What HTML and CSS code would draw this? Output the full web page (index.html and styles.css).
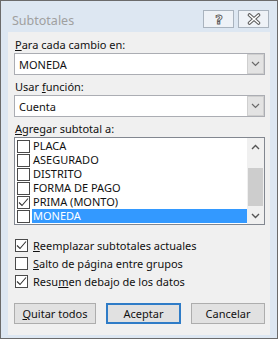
FILE: index.html
```
<!DOCTYPE html>
<html lang="es">
<head>
    <meta charset="UTF-8">
    <title>Subtotales</title>
    <link rel="stylesheet" href="styles.css">
</head>
<body>
    <div class="window">
        <div class="titlebar">
            <span class="title">Subtotales</span>
            <div class="title-buttons">
                <span class="tbtn">
                    <svg width="14" height="14" viewBox="0 0 14 14"><text x="7" y="12" text-anchor="middle" font-family="DejaVu Sans, sans-serif" font-size="13" font-weight="bold" fill="#fff" stroke="#5a5a5a" stroke-width="0.9">?</text></svg>
                </span>
                <span class="tbtn">
                    <svg width="14" height="12" viewBox="0 0 14 12">
                        <path d="M2.5 2 L11.5 10 M11.5 2 L2.5 10" stroke="#5a5a5a" stroke-width="3.6" stroke-linecap="round"/>
                        <path d="M2.5 2 L11.5 10 M11.5 2 L2.5 10" stroke="#fff" stroke-width="1.6" stroke-linecap="round"/>
                    </svg>
                </span>
            </div>
        </div>

        <div class="panel">
            <div class="label"><u>P</u>ara cada cambio en:</div>
            <div class="combo">
                <span class="combo-text">MONEDA</span>
                <span class="combo-btn"><svg width="9" height="6" viewBox="0 0 9 6"><path d="M1 1 L4.5 4.5 L8 1" fill="none" stroke="#6a6a6a" stroke-width="1.2"/></svg></span>
            </div>

            <div class="label">Usar <u>f</u>unción:</div>
            <div class="combo">
                <span class="combo-text">Cuenta</span>
                <span class="combo-btn"><svg width="9" height="6" viewBox="0 0 9 6"><path d="M1 1 L4.5 4.5 L8 1" fill="none" stroke="#6a6a6a" stroke-width="1.2"/></svg></span>
            </div>

            <div class="label"><u>A</u>gregar subtotal a:</div>
            <div class="listbox">
                <div class="list-items">
                    <div class="item"><span class="box"></span><span class="item-text">PLACA</span></div>
                    <div class="item"><span class="box"></span><span class="item-text">ASEGURADO</span></div>
                    <div class="item"><span class="box"></span><span class="item-text">DISTRITO</span></div>
                    <div class="item"><span class="box"></span><span class="item-text">FORMA DE PAGO</span></div>
                    <div class="item"><span class="box"><svg width="11" height="11" viewBox="0 0 11 11"><path d="M1 5.5 L4 8.5 L10 1.5" fill="none" stroke="#333" stroke-width="1.1"/></svg></span><span class="item-text">PRIMA (MONTO)</span></div>
                    <div class="item"><span class="box"></span><span class="item-text selected">MONEDA</span></div>
                </div>
                <div class="scrollbar">
                    <span class="sb-arrow"><svg width="9" height="6" viewBox="0 0 9 6"><path d="M1 5 L4.5 1.5 L8 5" fill="none" stroke="#555" stroke-width="1.4"/></svg></span>
                    <div class="sb-track"><div class="sb-thumb"></div></div>
                    <span class="sb-arrow"><svg width="9" height="6" viewBox="0 0 9 6"><path d="M1 1 L4.5 4.5 L8 1" fill="none" stroke="#555" stroke-width="1.4"/></svg></span>
                </div>
            </div>

            <div class="options">
                <div class="option"><span class="box"><svg width="11" height="11" viewBox="0 0 11 11"><path d="M1 5.5 L4 8.5 L10 1.5" fill="none" stroke="#333" stroke-width="1.1"/></svg></span><span><u>R</u>eemplazar subtotales actuales</span></div>
                <div class="option"><span class="box"></span><span><u>S</u>alto de página entre grupos</span></div>
                <div class="option"><span class="box"><svg width="11" height="11" viewBox="0 0 11 11"><path d="M1 5.5 L4 8.5 L10 1.5" fill="none" stroke="#333" stroke-width="1.1"/></svg></span><span>Resu<u>m</u>en debajo de los datos</span></div>
            </div>

            <div class="buttons">
                <span class="button quitar"><u>Q</u>uitar todos</span>
                <span class="button default">Aceptar</span>
                <span class="button cancel">Cancelar</span>
            </div>
        </div>
    </div>
</body>
</html>
```

FILE: styles.css
```
body {
    margin: 0;
    background: #ffffff;
    font-family: 'Noto Sans', 'Liberation Sans', sans-serif;
    font-size: 11px;
    color: #111;
}

.window {
    width: 278px;
    height: 339px;
    box-sizing: border-box;
    border: 1px solid #6b6b6b;
    background: #dde7f2;
    padding: 0 7px 3px 7px;
    display: flex;
    flex-direction: column;
}

.titlebar {
    height: 31px;
    display: flex;
    align-items: flex-start;
    justify-content: space-between;
}

.title {
    color: #a0a0a0;
    font-size: 12.5px;
    margin: 11px 0 0 4px;
    line-height: 17px;
}

.title-buttons {
    display: flex;
    gap: 4px;
    margin-top: 9px;
    margin-right: 1px;
}

.tbtn {
    width: 31px;
    height: 18px;
    box-sizing: border-box;
    border: 1px solid #a9b3be;
    background: #eef2f7;
    display: flex;
    align-items: center;
    justify-content: center;
}

.panel {
    flex: 1;
    background: #f0f0f0;
    padding: 5px 5px 0 6px;
    display: flex;
    flex-direction: column;
}

.label {
    height: 16px;
    line-height: 16px;
    padding-left: 1px;
}

.label + .combo {
    margin-bottom: 4px;
}

.combo {
    height: 22px;
    box-sizing: border-box;
    border: 1px solid #abadb3;
    background: #fff;
    display: flex;
    align-items: center;
    justify-content: space-between;
}

.combo-text {
    padding-left: 4px;
}

.combo-btn {
    width: 17px;
    height: 20px;
    box-sizing: border-box;
    background: #e3e3e3;
    border: 1px solid #cfcfcf;
    display: flex;
    align-items: center;
    justify-content: center;
}

.listbox {
    height: 88px;
    box-sizing: border-box;
    border: 1px solid #828790;
    background: #fff;
    display: flex;
}

.list-items {
    flex: 1;
    padding: 1px 0 0 2px;
}

.item {
    height: 14px;
    display: flex;
    align-items: center;
}

.item .box {
    margin-right: 2px;
}

.item-text {
    flex: 1;
    height: 14px;
    line-height: 14px;
    padding-left: 1px;
}

.item-text.selected {
    background: #3399ff;
    color: #fff;
}

.box {
    width: 13px;
    height: 13px;
    box-sizing: border-box;
    border: 1px solid #4a4a4a;
    background: #fff;
    display: flex;
    align-items: center;
    justify-content: center;
    flex-shrink: 0;
}

.scrollbar {
    width: 17px;
    background: #f0f0f0;
    display: flex;
    flex-direction: column;
}

.sb-arrow {
    height: 17px;
    display: flex;
    align-items: center;
    justify-content: center;
}

.sb-track {
    flex: 1;
    padding: 13px 1px 1px 1px;
}

.sb-thumb {
    height: 38px;
    background: #cdcdcd;
}

.options {
    margin-top: 11px;
    padding-left: 1px;
}

.option {
    height: 18px;
    display: flex;
    align-items: center;
    gap: 5px;
}

.buttons {
    margin-top: 13px;
    display: flex;
    gap: 10px;
}

.button {
    height: 21px;
    box-sizing: border-box;
    border: 1px solid #adadad;
    background: #e1e1e1;
    display: flex;
    align-items: center;
    justify-content: center;
}

.quitar {
    width: 82px;
}

.default {
    width: 75px;
    border: 2px solid #2f7cc7;
}

.cancel {
    width: 74px;
}
```
